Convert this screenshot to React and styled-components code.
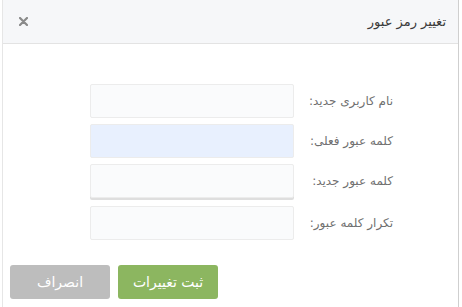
import React from 'react';
import styled, { createGlobalStyle } from 'styled-components';

const GlobalStyle = createGlobalStyle`
    html, body {
        margin: 0;
        padding: 0;
        background: #fff;
    }
    body {
        font-family: "DejaVu Sans", "Noto Sans", sans-serif;
    }
`;

const Dialog = styled.div`
    direction: rtl;
    box-sizing: border-box;
    width: 457px;
    height: 307px;
    margin-left: 2px;
    border-left: 1px solid #e6e6e6;
    border-right: 1px solid #cfcfcf;
    background: #fff;
    display: flex;
    flex-direction: column;
`;

const Header = styled.div`
    height: 44px;
    box-sizing: border-box;
    display: flex;
    align-items: center;
    justify-content: space-between;
    padding: 0 12px 0 13px;
    background: #f6f7f9;
    border-bottom: 1px solid #e3e3e3;
`;

const Title = styled.h4`
    margin: 0;
    font-size: 13px;
    font-weight: normal;
    color: #3a3a3a;
`;

const Close = styled.button`
    border: 0;
    background: none;
    padding: 0;
    width: 14px;
    height: 14px;
    display: flex;
    align-items: center;
    justify-content: center;
    cursor: pointer;
`;

const Form = styled.div`
    display: flex;
    flex-direction: column;
    padding: 40px 64px 0 0;
    gap: 6px;
`;

const Row = styled.div`
    display: flex;
    align-items: center;
    height: ${(p) => p.$h || 34}px;
`;

const Label = styled.label`
    width: 100px;
    padding-right: 1px;
    box-sizing: border-box;
    font-size: 12px;
    color: #707070;
    text-align: right;
    white-space: nowrap;
`;

const Input = styled.div`
    width: 204px;
    height: 34px;
    box-sizing: border-box;
    border: 1px solid #ececec;
    border-radius: 2px;
    background: ${(p) => (p.$active ? '#e8f0fe' : '#fafbfc')};
    box-shadow: ${(p) => (p.$shadow ? '0 2px 0 #dedede' : 'none')};
`;

const Footer = styled.div`
    margin-top: auto;
    display: flex;
    justify-content: flex-end;
    gap: 8px;
    padding: 0 0 8px 7px;
`;

const Button = styled.button`
    width: 100px;
    height: 34px;
    border: 0;
    border-radius: 3px;
    color: #fff;
    font-family: inherit;
    font-size: 14px;
    background: ${(p) => (p.$primary ? '#8cb660' : '#bdbdbd')};
`;

const fields = [
    { label: 'نام کاربری جدید:' },
    { label: 'کلمه عبور فعلی:', active: true },
    { label: 'کلمه عبور جدید:', shadow: true },
    { label: 'تکرار کلمه عبور:', h: 37 },
];

export default function App() {
    return (
        <>
            <GlobalStyle />
            <Dialog>
                <Header>
                    <Title>تغییر رمز عبور</Title>
                    <Close aria-label="بستن">
                        <svg width="9" height="9" viewBox="0 0 9 9">
                            <path d="M1 1 L8 8 M8 1 L1 8" stroke="#8a8a8a" strokeWidth="2.2" strokeLinecap="round" />
                        </svg>
                    </Close>
                </Header>
                <Form>
                    {fields.map((f) => (
                        <Row key={f.label} $h={f.h}>
                            <Label>{f.label}</Label>
                            <Input $active={f.active} $shadow={f.shadow} />
                        </Row>
                    ))}
                </Form>
                <Footer>
                    <Button $primary>ثبت تغییرات</Button>
                    <Button>انصراف</Button>
                </Footer>
            </Dialog>
        </>
    );
}
